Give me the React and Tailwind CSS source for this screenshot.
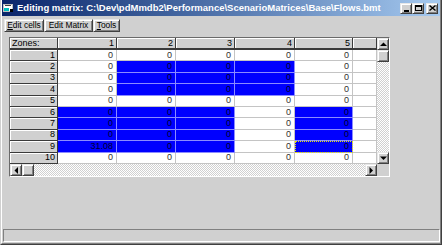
import React from "react";

const COLS = [59, 59, 59, 60, 58, 24];
const ROWS = [1, 2, 3, 4, 5, 6, 7, 8, 9, 10];

function isSelected(r, c) {
    if (r >= 2 && r <= 4 && c >= 2 && c <= 4) return true;
    if (r >= 6 && r <= 9 && (c <= 3 || c === 5)) return true;
    return false;
}

function Arrow({ dir }) {
    const pts = {
        up: "0,4 3.5,0.5 7,4",
        down: "0,0.5 3.5,4 7,0.5",
        left: "4,0 0.5,3.5 4,7",
        right: "0.5,0 4,3.5 0.5,7",
    }[dir];
    const vertical = dir === "up" || dir === "down";
    return (
        <svg width={vertical ? 7 : 5} height={vertical ? 5 : 7} viewBox={vertical ? "0 0 7 5" : "0 0 5 7"}>
            <polygon points={pts} fill="#000" />
        </svg>
    );
}

function RaisedBox({ className = "", children }) {
    return (
        <div className={`bg-[#d0d0d0] border border-t-[#e8e8e8] border-l-[#e8e8e8] border-r-[#404040] border-b-[#404040] shadow-[inset_1px_1px_0_#fff,inset_-1px_-1px_0_#808080] flex items-center justify-center ${className}`}>
            {children}
        </div>
    );
}

function Track({ className = "" }) {
    return <div className={`bg-[repeating-conic-gradient(#ffffff_0%_25%,#d0d0d0_0%_50%)] bg-[length:2px_2px] ${className}`} />;
}

function HeaderCell({ children, className = "" }) {
    return (
        <div className={`bg-[#d0d0d0] border-r border-b border-[#3a3a3a] shadow-[inset_1px_1px_0_#fff] flex items-center text-[9px] leading-none text-black ${className}`}>
            {children}
        </div>
    );
}

function MatrixGrid() {
    return (
        <div className="w-[381px] h-[140px] border border-t-[#6a6a6a] border-l-[#6a6a6a] border-r-white border-b-white flex flex-col">
            <div className="flex h-[126px]">
                <div
                    className="grid w-[367px] h-[126px] bg-white overflow-hidden"
                    style={{ gridTemplateColumns: "48px " + COLS.map((w) => w + "px").join(" "), gridTemplateRows: "12px repeat(10, 11.4px)" }}
                >
                    <HeaderCell className="pl-[2px] border-b-2">Zones:</HeaderCell>
                    {COLS.map((_, i) => (
                        <HeaderCell key={i} className="justify-end pr-[2px] border-b-2">
                            {i < 5 ? i + 1 : ""}
                        </HeaderCell>
                    ))}
                    {ROWS.map((r) => (
                        <React.Fragment key={r}>
                            <HeaderCell className="justify-end pr-[2px]">{r}</HeaderCell>
                            {COLS.map((_, i) => {
                                const c = i + 1;
                                const sel = isSelected(r, c);
                                const focus = r === 9 && c === 5;
                                const value = c === 6 ? "" : r === 9 && c === 1 ? "31.08" : "0";
                                return (
                                    <div
                                        key={c}
                                        className={`flex items-center justify-end pr-[3px] text-[9px] leading-none border-r border-b ${
                                            sel ? "bg-[#0000ff] text-[#00002e] border-[#8c8cff]" : "bg-white text-[#303030] border-[#c4c4c4]"
                                        } ${focus ? "outline-1 outline-dotted outline-[#e8e800] -outline-offset-1" : ""}`}
                                    >
                                        {value}
                                    </div>
                                );
                            })}
                        </React.Fragment>
                    ))}
                </div>
                <div className="w-[12px] flex flex-col">
                    <RaisedBox className="h-[12px]"><Arrow dir="up" /></RaisedBox>
                    <RaisedBox className="h-[12px]" />
                    <Track className="flex-1" />
                    <RaisedBox className="h-[12px]"><Arrow dir="down" /></RaisedBox>
                </div>
            </div>
            <div className="flex h-[12px]">
                <RaisedBox className="w-[12px]"><Arrow dir="left" /></RaisedBox>
                <RaisedBox className="w-[12px]" />
                <Track className="flex-1" />
                <RaisedBox className="w-[12px]"><Arrow dir="right" /></RaisedBox>
                <div className="w-[12px] bg-[#d0d0d0]" />
            </div>
        </div>
    );
}

export default function App() {
    return (
        <div className="w-[442px] h-[245px] bg-[#d0d0d0] flex flex-col border-l border-r border-b border-l-[#d0d0d0] border-r-[#404040] border-b-[#404040] font-['Liberation_Sans',Arial,sans-serif] overflow-hidden select-none">
            <div className="flex-1 flex flex-col border-l border-r border-b border-l-white border-r-[#808080] border-b-[#808080]">
                {/* Title bar */}
                <div className="h-[16px] flex items-center pl-[1px] pr-[2px] bg-gradient-to-r from-[#0a246a] to-[#a6caf0]">
                    <svg width="11" height="10" viewBox="0 0 11 10" className="shrink-0">
                        <rect x="0.5" y="1.5" width="9" height="7" fill="#fff" stroke="#c0c0c0" />
                        <rect x="1" y="5" width="5" height="3" fill="#00c0c0" />
                        <rect x="2" y="2" width="6" height="1" fill="#404040" />
                        <rect x="7" y="6" width="3" height="3" fill="#000" />
                    </svg>
                    <span className="ml-[3px] text-white font-bold text-[9.5px] leading-none whitespace-nowrap">
                        Editing matrix: C:\Dev\pdMmdb2\Performance\ScenarioMatrices\Base\Flows.bmt
                    </span>
                    <div className="ml-auto flex items-center">
                        <RaisedBox className="w-[12px] h-[11px] items-end pb-[1px]">
                            <div className="w-[5px] h-[2px] bg-black" />
                        </RaisedBox>
                        <RaisedBox className="w-[12px] h-[11px]">
                            <div className="w-[7px] h-[6px] border border-black border-t-2" />
                        </RaisedBox>
                        <RaisedBox className="w-[12px] h-[11px] ml-[2px]">
                            <svg width="7" height="6" viewBox="0 0 7 6">
                                <path d="M0.5 0.5 L6.5 5.5 M6.5 0.5 L0.5 5.5" stroke="#000" strokeWidth="1.4" />
                            </svg>
                        </RaisedBox>
                    </div>
                </div>

                {/* Menu bar */}
                <div className="h-[18px] flex items-center pl-[2px] text-[8.4px] leading-none text-black">
                    <RaisedBox className="w-[40px] h-[13px]">
                        <span><span className="underline">E</span>dit cells</span>
                    </RaisedBox>
                    <RaisedBox className="w-[49px] h-[13px]">
                        <span>Edit Matrix</span>
                    </RaisedBox>
                    <RaisedBox className="w-[27px] h-[13px]">
                        <span><span className="underline">T</span>ools</span>
                    </RaisedBox>
                </div>

                {/* Matrix */}
                <div className="pl-[7px] pt-[3px]">
                    <MatrixGrid />
                </div>

                <div className="flex-1" />

                {/* Status bar */}
                <div className="ml-[1px] mb-[1px] w-[437px] h-[13px] border border-t-[#808080] border-l-[#808080] border-r-white border-b-white" />
            </div>
        </div>
    );
}
